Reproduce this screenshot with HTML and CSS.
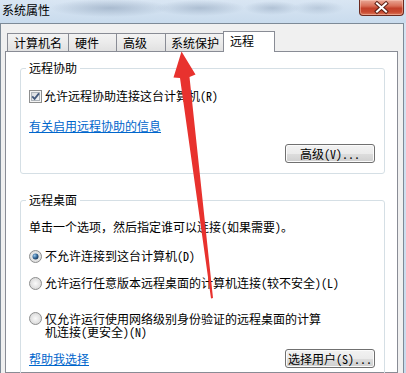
FILE: index.html
```html
<!DOCTYPE html>
<html lang="zh-CN">
<head>
<meta charset="utf-8">
<title>系统属性</title>
<link rel="stylesheet" href="styles.css">
</head>
<body>
<div class="window">
  <div class="titlebar">
    <span class="title">系统属性</span>
    <div class="close-btn">
      <svg width="43" height="15" viewBox="0 0 43 15">
        <path d="M17 3.5 L26 11.5 M26 3.5 L17 11.5" stroke="#5b2015" stroke-width="4" stroke-linecap="square"/>
        <path d="M17 3.5 L26 11.5 M26 3.5 L17 11.5" stroke="#ffffff" stroke-width="2" stroke-linecap="square"/>
      </svg>
    </div>
  </div>
  <div class="client">
    <div class="tabs">
      <div class="tab tab-name">计算机名</div>
      <div class="tab tab-hw">硬件</div>
      <div class="tab tab-adv">高级</div>
      <div class="tab tab-prot">系统保护</div>
      <div class="tab tab-remote active">远程</div>
    </div>
    <div class="panel">
      <fieldset class="group">
        <legend>远程协助</legend>
        <div class="group-body">
          <div class="option check-row">
            <svg class="control" width="13" height="13" viewBox="0 0 13 13">
              <defs>
                <linearGradient id="cbFill" x1="0" y1="0" x2="1" y2="1">
                  <stop offset="0" stop-color="#d6d9dd"/>
                  <stop offset="1" stop-color="#f6f7f8"/>
                </linearGradient>
              </defs>
              <rect x="0.5" y="0.5" width="12" height="12" fill="#f4f4f4" stroke="#8e8f8f"/>
              <rect x="2.5" y="2.5" width="8" height="8" fill="url(#cbFill)" stroke="#aeb4ba"/>
              <path d="M3.2 6.3 L5.6 8.8 L10 3.4" fill="none" stroke="#43597c" stroke-width="1.8"/>
            </svg>
            <span class="option-text">允许远程协助连接这台计算机(R)</span>
          </div>
          <a class="link link-info" href="#">有关启用远程协助的信息</a>
          <div class="btn-row">
            <button class="btn" type="button">高级(V)...</button>
          </div>
        </div>
      </fieldset>

      <fieldset class="group group-desktop">
        <legend>远程桌面</legend>
        <div class="group-body">
          <p class="desc">单击一个选项，然后指定谁可以连接(如果需要)。</p>
          <div class="option radio-row r1">
            <svg class="control" width="13" height="13" viewBox="0 0 13 13">
              <defs>
                <radialGradient id="rbOn" cx="0.5" cy="0.5" r="0.6">
                  <stop offset="0" stop-color="#f8f8f8"/>
                  <stop offset="1" stop-color="#d5d5d5"/>
                </radialGradient>
                <radialGradient id="dotOn" cx="0.35" cy="0.35" r="0.75">
                  <stop offset="0" stop-color="#9cc7ea"/>
                  <stop offset="0.5" stop-color="#3a6e9e"/>
                  <stop offset="1" stop-color="#132f4d"/>
                </radialGradient>
              </defs>
              <circle cx="6.5" cy="6.5" r="6" fill="url(#rbOn)" stroke="#8e8f8f"/>
              <circle cx="6.5" cy="6.5" r="3" fill="url(#dotOn)"/>
            </svg>
            <span class="option-text">不允许连接到这台计算机(D)</span>
          </div>
          <div class="option radio-row r2">
            <svg class="control" width="13" height="13" viewBox="0 0 13 13">
              <defs>
                <radialGradient id="rbOff1" cx="0.5" cy="0.5" r="0.6">
                  <stop offset="0" stop-color="#fafafa"/>
                  <stop offset="1" stop-color="#d2d2d2"/>
                </radialGradient>
              </defs>
              <circle cx="6.5" cy="6.5" r="6" fill="url(#rbOff1)" stroke="#8e8f8f"/>
            </svg>
            <span class="option-text">允许运行任意版本远程桌面的计算机连接(较不安全)(L)</span>
          </div>
          <div class="option radio-row r3">
            <svg class="control" width="13" height="13" viewBox="0 0 13 13">
              <defs>
                <radialGradient id="rbOff2" cx="0.5" cy="0.5" r="0.6">
                  <stop offset="0" stop-color="#fafafa"/>
                  <stop offset="1" stop-color="#d2d2d2"/>
                </radialGradient>
              </defs>
              <circle cx="6.5" cy="6.5" r="6" fill="url(#rbOff2)" stroke="#8e8f8f"/>
            </svg>
            <span class="option-text wrap">仅允许运行使用网络级别身份验证的远程桌面的计算机连接(更安全)(N)</span>
          </div>
          <div class="footer-row">
            <a class="link" href="#">帮助我选择</a>
            <button class="btn" type="button">选择用户(S)...</button>
          </div>
        </div>
      </fieldset>
    </div>
  </div>

  <svg class="arrow" width="406" height="373" viewBox="0 0 406 373">
    <polygon points="181.5,51.5 195.5,74.5 189.5,77 213,298 211,298.5 180,78 173.5,77.5" fill="#e8322e"/>
  </svg>
</div>
</body>
</html>
```

FILE: styles.css
```css
html, body {
  margin: 0;
  padding: 0;
}

body {
  width: 406px;
  height: 373px;
  overflow: hidden;
  font-family: "Noto Sans Mono CJK SC", "Noto Sans CJK SC", sans-serif;
  font-size: 12px;
  color: #000;
  background: #c9dbed;
}

.window {
  position: relative;
  width: 406px;
  height: 373px;
  display: flex;
  flex-direction: column;
  background: linear-gradient(180deg, #d6e4f2 0%, #c8daec 100%);
}

.titlebar {
  height: 23px;
  flex: none;
  display: flex;
  justify-content: space-between;
  align-items: flex-start;
  padding-right: 2px;
  background:
    radial-gradient(60px 9px at 110px 8px, rgba(135, 155, 180, 0.55), rgba(135, 155, 180, 0)),
    radial-gradient(45px 8px at 200px 8px, rgba(135, 155, 180, 0.5), rgba(135, 155, 180, 0)),
    radial-gradient(28px 7px at 272px 8px, rgba(135, 155, 180, 0.45), rgba(135, 155, 180, 0)),
    radial-gradient(26px 7px at 318px 8px, rgba(135, 155, 180, 0.35), rgba(135, 155, 180, 0)),
    linear-gradient(180deg, #d9e6f3 0%, #c9dbed 100%);
}

.title {
  padding-left: 2px;
  line-height: 20px;
  color: #000;
}

.close-btn {
  width: 45px;
  height: 16px;
  box-sizing: border-box;
  border: 1px solid #6b2a1f;
  border-top: none;
  border-radius: 0 0 4px 4px;
  background: linear-gradient(180deg, #e9a796 0%, #d86e57 40%, #c2412a 55%, #c94a31 80%, #dc7a5c 100%);
  box-shadow: inset 0 0 0 1px rgba(255, 210, 195, 0.45);
  display: flex;
}

.client {
  flex: 1;
  margin-right: 2px;
  display: flex;
  flex-direction: column;
  background: #f0f0f0;
  border: 1px solid #7d8a97;
  border-bottom: none;
  padding: 7px 5px 0 4px;
  min-height: 0;
}

.tabs {
  display: flex;
  align-items: flex-end;
  height: 20px;
  flex: none;
}

.tab {
  position: relative;
  z-index: 1;
  box-sizing: border-box;
  height: 18px;
  margin-left: -1px;
  padding-left: 6px;
  border: 1px solid #898c95;
  border-bottom: none;
  line-height: 17px;
  white-space: nowrap;
  background: linear-gradient(180deg, #f3f3f3 0%, #ebebeb 50%, #e1e1e1 100%);
}

.tab-name { width: 62px; margin-left: 2px; }
.tab-hw { width: 49px; }
.tab-adv { width: 50px; }
.tab-prot { width: 59px; padding-left: 5px; }
.tab-remote { width: 52px; }

.tab.active {
  z-index: 2;
  height: 21px;
  margin-bottom: -1px;
  line-height: 18px;
  background: #ffffff;
}

.panel {
  flex: 1;
  background: #ffffff;
  border: 1px solid #898c95;
  padding: 9px 12px 0 14px;
  min-height: 0;
}

.group {
  margin: 0;
  min-width: 0;
  padding: 0 9px 10px 8px;
  border: 1px solid #d5dfe5;
  border-radius: 3px;
}

.group legend {
  padding: 0 3px;
  margin-left: -3px;
  line-height: 14px;
  font: inherit;
  line-height: 14px;
}

.group-desktop {
  margin-top: 19px;
}

.group-body {
  display: flex;
  flex-direction: column;
  align-items: flex-start;
}

.option {
  display: flex;
  align-items: center;
  gap: 2px;
  line-height: 14px;
}

.control {
  flex: none;
  display: block;
}

.check-row { margin-top: 14px; }

.link {
  color: #0066cc;
  text-decoration: underline;
  text-underline-offset: 1px;
  line-height: 14px;
}

.link-info { margin-top: 16px; }

.btn-row {
  align-self: stretch;
  display: flex;
  justify-content: flex-end;
  margin-top: 11px;
}

.btn {
  width: 90px;
  height: 19px;
  box-sizing: border-box;
  padding: 0;
  margin: 0;
  border: 1px solid #707070;
  border-radius: 3px;
  background: linear-gradient(180deg, #f2f2f2 0%, #ebebeb 50%, #dddddd 51%, #cfcfcf 100%);
  box-shadow: inset 0 0 0 1px #fbfbfb;
  font: inherit;
  line-height: 17px;
  color: #000;
  text-align: center;
}

.desc {
  margin: 13px 0 0;
  line-height: 14px;
}

.radio-row { gap: 3px; }
.r1 { margin-top: 15px; }
.r2 { margin-top: 13px; }
.r3 {
  margin-top: 22px;
  align-items: flex-start;
  line-height: 13px;
}

.wrap {
  max-width: 280px;
}

.footer-row {
  align-self: stretch;
  display: flex;
  justify-content: space-between;
  align-items: center;
  margin-top: 11px;
}

.arrow {
  position: absolute;
  left: 0;
  top: 0;
  pointer-events: none;
}
```
